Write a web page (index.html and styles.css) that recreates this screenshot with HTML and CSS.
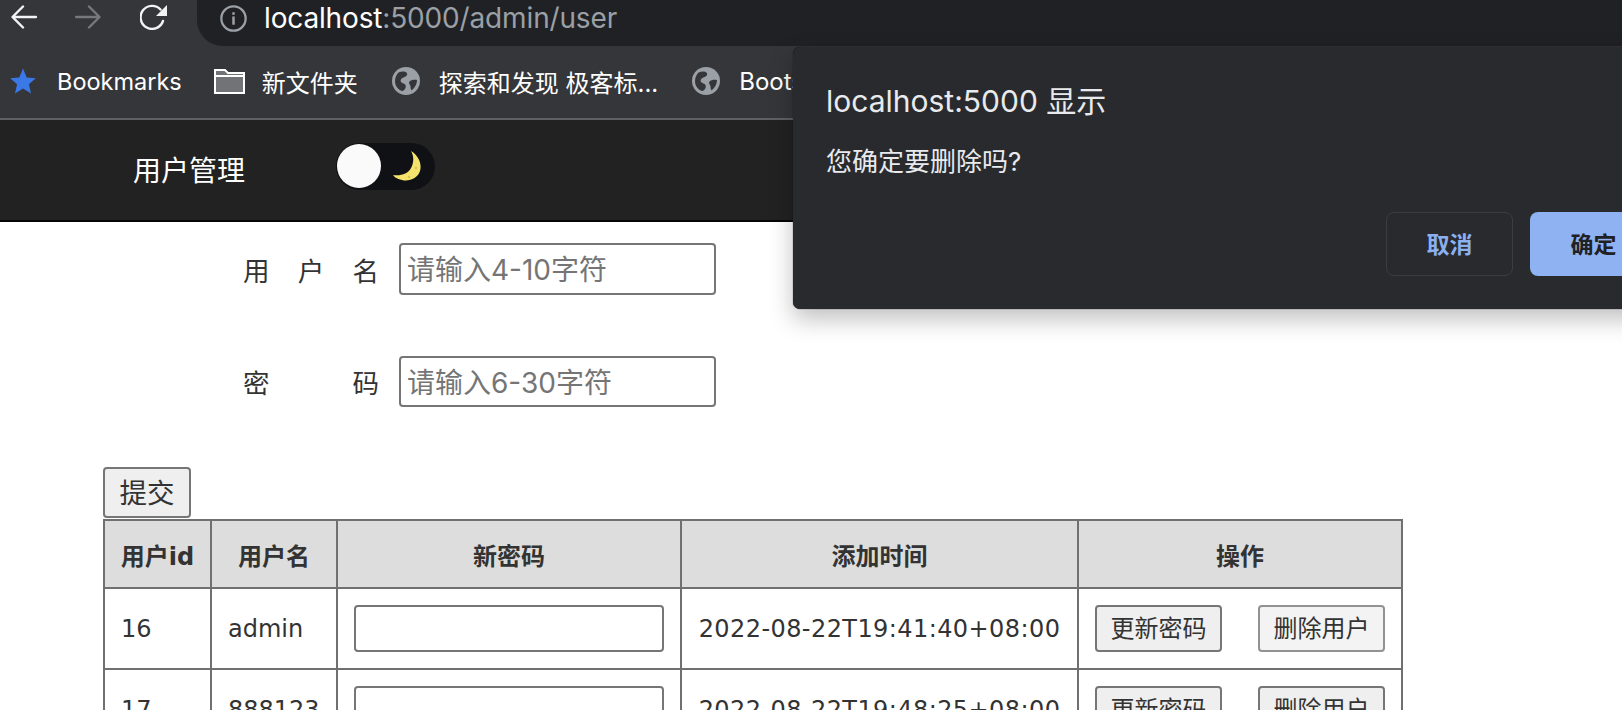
FILE: index.html
```html
<!DOCTYPE html>
<html lang="zh">
<head>
<meta charset="utf-8">
<title>用户管理</title>
<link rel="stylesheet" href="styles.css">
</head>
<body>
<div class="toolbar">
  <svg class="tool-icon" width="26" height="24" viewBox="0 0 26 24"><path d="M25 12H2M12 1.500L1.500 12L12 22.500" fill="none" stroke="#f1f3f4" stroke-width="2.400" stroke-linecap="round" stroke-linejoin="round"/></svg>
  <svg class="tool-icon" width="26" height="24" viewBox="0 0 26 24"><path d="M1 12H24M14 1.500L24.500 12L14 22.500" fill="none" stroke="#77787b" stroke-width="2.400" stroke-linecap="round" stroke-linejoin="round"/></svg>
  <svg class="tool-icon tool-reload" width="28" height="26" viewBox="0 0 28 26"><path d="M23 17A11.500 11.500 0 1 1 20.500 5.500" fill="none" stroke="#f1f3f4" stroke-width="2.400" stroke-linecap="round"/><path d="M27 1V12H16Z" fill="#f1f3f4"/></svg>
  <div class="urlbar">
    <svg width="27" height="27" viewBox="0 0 26 26"><circle cx="13" cy="13" r="11.700" fill="none" stroke="#9aa0a6" stroke-width="2.200"/><rect x="11.800" y="11" width="2.400" height="8" fill="#9aa0a6"/><rect x="11.800" y="7" width="2.400" height="2.400" fill="#9aa0a6"/></svg>
    <span class="url"><span class="url-host">localhost</span>:5000/admin/user</span>
  </div>
</div>
<div class="bookmarks">
  <svg class="bm-star" width="26" height="26" viewBox="0 0 26 26"><path d="M13 0.500L16.700 9.500L25.800 10.200L18.900 16.200L21 25.500L13 20.500L5 25.500L7.100 16.200L0.200 10.200L9.300 9.500Z" fill="#3b78e7"/></svg>
  <span class="bm-text bm-first">Bookmarks</span>
  <svg class="bm-folder" width="31" height="25" viewBox="0 0 31 25"><path d="M1 24V1H11L14 4H30V24Z" fill="#727376" stroke="#fff" stroke-width="2"/><path d="M1 7H30" stroke="#fff" stroke-width="2"/></svg>
  <span class="bm-text bm-folder-text">新文件夹</span>
  <svg class="bm-globe" width="28" height="28" viewBox="0 0 28 28"><circle cx="14" cy="14" r="14" fill="#9aa0a6"/><path d="M6.500 5.500C10 4 14 4 15 6.500C16 9 12.500 10 10.500 11C8 12.500 8 15 10.500 16C13 17 14.500 18 13.500 21C13 22.500 11.500 24 10 24C5 22 3 18 3 14C3 10.500 4.500 7.500 6.500 5.500ZM18 14C20 12.500 23 12.500 25 13C25 17 23 21 19.500 23.500C18 21 19 19.500 18 18C17 16.500 16.500 15.200 18 14Z" fill="#35363a"/></svg>
  <span class="bm-text bm-globe-text">探索和发现 极客标...</span>
  <svg class="bm-globe" width="28" height="28" viewBox="0 0 28 28"><circle cx="14" cy="14" r="14" fill="#9aa0a6"/><path d="M6.500 5.500C10 4 14 4 15 6.500C16 9 12.500 10 10.500 11C8 12.500 8 15 10.500 16C13 17 14.500 18 13.500 21C13 22.500 11.500 24 10 24C5 22 3 18 3 14C3 10.500 4.500 7.500 6.500 5.500ZM18 14C20 12.500 23 12.500 25 13C25 17 23 21 19.500 23.500C18 21 19 19.500 18 18C17 16.500 16.500 15.200 18 14Z" fill="#35363a"/></svg>
  <span class="bm-text bm-globe-text">Bootstrap</span>
</div>
<nav class="nav">
  <span class="nav-title">用户管理</span>
  <div class="toggle">
    <span class="knob"></span>
    <svg class="moon" width="28" height="30" viewBox="0 0 28 30"><path d="M18 0C26 5 29 13 27 20C25 27 16 31 9 29C5 28 2 27 0 24C8 25 15 23 18 17C21 11 21 5 18 0Z" fill="#f6e36e"/><circle cx="23" cy="17" r="1.300" fill="#d9c455"/><circle cx="16" cy="26" r="1.200" fill="#d9c455"/></svg>
  </div>
</nav>
<main class="main">
  <div class="field field-user">
    <span class="label"><span>用</span><span>户</span><span>名</span></span>
    <input class="text-input" placeholder="请输入4-10字符">
  </div>
  <div class="field field-pass">
    <span class="label"><span>密</span><span>码</span></span>
    <input class="text-input text-input-short" placeholder="请输入6-30字符">
  </div>
  <button class="submit">提交</button>
  <table class="users">
    <colgroup>
      <col class="c-id"><col class="c-name"><col class="c-pass"><col class="c-time"><col class="c-op">
    </colgroup>
    <thead>
      <tr><th>用户id</th><th>用户名</th><th>新密码</th><th>添加时间</th><th>操作</th></tr>
    </thead>
    <tbody>
      <tr>
        <td>16</td><td>admin</td><td><input class="pass-input"></td><td class="time">2022-08-22T19:41:40+08:00</td>
        <td><div class="ops"><button class="op">更新密码</button><button class="op op-soft">删除用户</button></div></td>
      </tr>
      <tr>
        <td>17</td><td>888123</td><td><input class="pass-input"></td><td class="time">2022-08-22T19:48:25+08:00</td>
        <td><div class="ops"><button class="op">更新密码</button><button class="op">删除用户</button></div></td>
      </tr>
    </tbody>
  </table>
</main>
<div class="dialog">
  <div class="dlg-title">localhost:5000 显示</div>
  <div class="dlg-msg">您确定要删除吗?</div>
  <div class="dlg-actions">
    <button class="dlg-btn dlg-cancel">取消</button>
    <button class="dlg-btn dlg-ok">确定</button>
  </div>
</div>
</body>
</html>
```
FILE: styles.css
```css
* { box-sizing: border-box; }
html, body { margin: 0; height: 710px; overflow: hidden; background: #fff; }
body {
  position: relative;
  width: 1622px;
  font-family: "DejaVu Sans", "Noto Sans CJK SC", sans-serif;
  color: #333;
}

.toolbar {
  height: 46px;
  background: #35363a;
  display: flex;
  align-items: center;
  padding-left: 11px;
  gap: 38px;
}
.tool-icon { margin-top: -12px; flex: none; }
.tool-reload { margin-left: 1px; }
.urlbar {
  flex: 1;
  height: 46px;
  margin-left: -9px;
  background: #202124;
  border-bottom-left-radius: 26px;
  display: flex;
  align-items: center;
  padding-left: 23px;
  gap: 17px;
}
.urlbar svg { margin-top: -9px; }
.url {
  font: 28px "Inter", "Liberation Sans", sans-serif;
  color: #9aa0a6;
  margin-top: -10px;
  letter-spacing: -0.15px;
}
.url-host { color: #fff; }

.bookmarks {
  height: 74px;
  background: #35363a;
  border-bottom: 2px solid #5f6063;
  display: flex;
  align-items: center;
  padding-left: 10px;
  padding-bottom: 2px;
}
.bm-text {
  font: 24px "Inter", "Noto Sans CJK SC", sans-serif;
  color: #fff;
  white-space: nowrap;
}
.bm-first { font-size: 23.500px; margin-left: 21px; margin-right: 32px; }
.bm-folder { flex: none; }
.bm-folder-text { margin-left: 17px; margin-right: 34px; }
.bm-globe { flex: none; }
.bm-globe-text { margin-left: 19px; margin-right: 34px; }

.nav {
  height: 102px;
  background: #222;
  border-bottom: 2px solid #050505;
  display: flex;
  align-items: center;
  padding-left: 133px;
}
.nav-title {
  font: 28px "Noto Sans CJK SC", sans-serif;
  color: #fff;
  margin-right: 91px;
  margin-top: -2px;
}
.toggle {
  width: 99px;
  height: 47px;
  border-radius: 24px;
  background: #101114;
  display: flex;
  align-items: center;
  justify-content: space-between;
  padding: 0 14px 0 1px;
  margin-top: -8px;
}
.knob { width: 44px; height: 44px; border-radius: 50%; background: #fafafa; }

.main { padding-left: 103px; }
.field { display: flex; align-items: center; padding-left: 140px; gap: 20px; }
.field-user { margin-top: 21px; }
.field-pass { margin-top: 61px; }
.label {
  width: 136px;
  display: flex;
  justify-content: space-between;
  font: 26.500px "Noto Sans CJK SC", sans-serif;
}
.text-input {
  width: 317px;
  height: 52px;
  border: 2px solid #767676;
  border-radius: 4px;
  padding: 2px 6px 0;
  font: 28px "Inter", "Noto Sans CJK SC", sans-serif;
  background: #fff;
}
.text-input-short { height: 51px; }
.text-input::placeholder { color: #757575; opacity: 1; }

.submit {
  display: block;
  width: 88px;
  height: 51px;
  margin-top: 60px;
  padding: 0 0 4px;
  background: #efefef;
  border: 2px solid #767676;
  border-radius: 4px;
  font: 27.500px "Noto Sans CJK SC", sans-serif;
  color: #333;
}

.users {
  margin-top: 1px;
  border-collapse: collapse;
  table-layout: fixed;
  width: 1298px;
  font-size: 24px;
  border: 2px solid #707070;
}
.c-id { width: 107px; }
.c-name { width: 126px; }
.c-pass { width: 344px; }
.c-time { width: 397px; }
.c-op { width: 324px; }
.users th, .users td { border: 2px solid #707070; }
.users th {
  height: 68px;
  background: #ddd;
  font-size: 24px;
  font-weight: 700;
  padding: 0;
}
.users td { height: 81px; padding: 0 16px; white-space: nowrap; }
.time { text-align: center; letter-spacing: 0.42px; }
.pass-input {
  display: block;
  width: 310px;
  height: 47px;
  border: 2px solid #767676;
  border-radius: 4px;
  background: #fff;
}
.ops { display: flex; justify-content: space-between; }
.op {
  width: 127px;
  height: 47px;
  padding: 0 0 4px;
  background: #efefef;
  border: 2px solid #767676;
  border-radius: 4px;
  font: 24px "Noto Sans CJK SC", sans-serif;
  color: #333;
}
.op-soft { border-color: #929292; background: #f3f3f3; }

.dialog {
  position: absolute;
  left: 793px;
  top: 47px;
  width: 896px;
  height: 262px;
  background: #292a2d;
  border-radius: 7px;
  box-shadow: 0 0 1px #000, 0 10px 24px rgba(0, 0, 0, 0.25);
  padding: 34px 32px 0 33px;
  display: flex;
  flex-direction: column;
}
.dlg-title {
  font: 30px "Inter", "Noto Sans CJK SC", sans-serif;
  line-height: 40px;
  color: #e8eaed;
}
.dlg-msg {
  font: 26px "Inter", "Noto Sans CJK SC", sans-serif;
  line-height: 36px;
  color: #e8eaed;
  margin-top: 23px;
}
.dlg-actions {
  margin-top: 32px;
  display: flex;
  justify-content: flex-end;
  gap: 17px;
}
.dlg-btn {
  width: 127px;
  height: 64px;
  padding: 0 0 2px;
  border-radius: 8px;
  font: 600 23px "Inter", "Noto Sans CJK SC", sans-serif;
}
.dlg-cancel { background: #292a2d; border: 1px solid #3c3d41; color: #8ab0f0; }
.dlg-ok { background: #8fb2f2; border: 0; color: #202124; }
```
